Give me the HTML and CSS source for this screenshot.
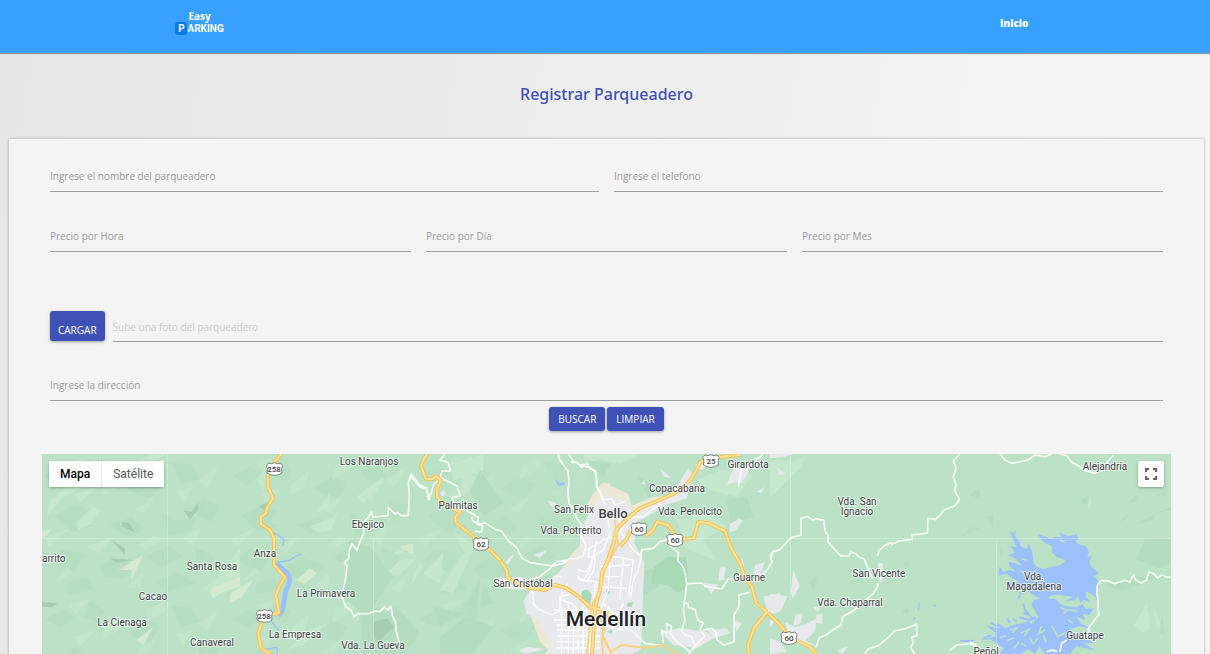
FILE: index.html
```html
<!DOCTYPE html>
<html lang="es">
<head>
<meta charset="utf-8">
<meta name="viewport" content="width=device-width, initial-scale=1">
<title>Easy Parking</title>
<link rel="stylesheet" href="styles.css">
</head>
<body>
<header class="topbar">
  <a class="logo" href="#">
    <span class="logo-top">Easy</span>
    <span class="logo-bottom"><span class="logo-p">P</span><span class="logo-rest">ARKING</span></span>
  </a>
  <nav><a class="nav-link" href="#">Inicio</a></nav>
</header>
<h1 class="title">Registrar Parqueadero</h1>
<main class="card">
  <form class="form">
    <div class="row two">
      <div class="field"><label for="nombre">Ingrese el nombre del parqueadero</label><input id="nombre" type="text"></div>
      <div class="field"><label for="telefono">Ingrese el telefono</label><input id="telefono" type="text"></div>
    </div>
    <div class="row three">
      <div class="field"><label for="hora">Precio por Hora</label><input id="hora" type="text"></div>
      <div class="field"><label for="dia">Precio por Día</label><input id="dia" type="text"></div>
      <div class="field"><label for="mes">Precio por Mes</label><input id="mes" type="text"></div>
    </div>
    <div class="upload">
      <button class="btn btn-file" type="button">CARGAR</button>
      <div class="field"><input type="text" aria-label="Foto del parqueadero" placeholder="Sube una foto del parqueadero"></div>
    </div>
    <div class="field"><label for="direccion">Ingrese la dirección</label><input id="direccion" type="text"></div>
    <div class="actions">
      <button class="btn" type="button">BUSCAR</button>
      <button class="btn" type="button">LIMPIAR</button>
    </div>
  </form>
  <section class="map" aria-label="Mapa">
    <svg class="map-art" viewBox="42 454 1129 200" preserveAspectRatio="xMidYMin slice">
      <defs>
        <pattern id="relief" width="187" height="143" patternUnits="userSpaceOnUse" x="42" y="454">
          <path class="dark" d="M3 22l18-9 12 6-14 12zM48 4l14 10-4 12-17-6zM84 34l20-12 15 8-10 14-14-3zM128 8l22 3 8 14-18 5zM12 62l20-11 17 7-9 10 12 4-22 6zM67 71l23-8 12 12-16 8zM120 58l14 9 20-5-6 15-22 4zM160 44l19 8-10 16-14-7zM6 107l14-12 24 5-12 17zM57 112l17-8 22 8-14 13-18-2zM104 103l22-12 14 11-20 12zM152 93l17 7 8 20-20-6zM28 128l18-4 5 12-26 4zM113 128l24-9 17 11-29 8z"/>
          <path class="light" d="M26 8l22-6-14 15zM62 31l18-14-4 17-16 7zM106 12l16-8 3 9-22 13zM156 26l21-13-12 21zM32 40l22-7-16 16zM92 56l21-14-9 17zM134 37l17-4-9 15zM2 84l26-10-20 19zM46 92l24-9-13 17zM97 91l14-9 9 4-16 9zM140 84l20-12-8 19zM14 127l12-13 4 5zM84 133l17-14-2 15zM160 136l20-17-8 20z"/>
        </pattern>
        <linearGradient id="fadeLeft"><stop offset="0" stop-color="#fff" stop-opacity=".8"/><stop offset=".82" stop-color="#fff" stop-opacity=".5"/><stop offset="1" stop-color="#fff" stop-opacity="0"/></linearGradient>
        <mask id="reliefMask"><rect x="42" y="454" width="590" height="400" fill="url(#fadeLeft)"/></mask>
        <symbol id="shield" viewBox="0 0 18 14"><path d="M3 1q3 1.5 6-.3Q12 2.500 15 1l2 2.500Q15.500 7 16.500 11q-3 2.500-7.500 2.300Q4.500 13.500 1.500 11 2.500 7 1 3.500z" fill="#fff" stroke="#777" stroke-width=".9"/></symbol>
      </defs>
      <rect x="42" y="454" width="1129" height="400" fill="#bbe2c6"/>
      <rect x="42" y="454" width="590" height="400" fill="url(#relief)" mask="url(#reliefMask)"/>

      <!-- relief, west -->
      <g transform="translate(40 450) scale(.33333)">
        <path class="light" d="M30 150l70-50 60-40-30 50-60 30-50 60zM110 215l50-45 25 10-30 40-40 20zM270 40l70-28 40 0-60 40zM500 430l60-80 40-60v90l-50 50z"/>
        <path class="pale" d="M6 245l30-10-20 25-10 5zM235 360l75-45-35 75 0-30zM520 410l60-20 20-10v30l-50 15-30 20-10-15zM290 570l50-40-30 55z"/>
        <path class="deep" d="M248 215l20 5 17 28-40-20zM430 180l25 5 20-28 0 20-25 32zM215 270l40 25 0 20zM210 325l70 5-50 8zM6 455l48 5-20 12-28-2z"/>
      </g>
      <g transform="translate(230 450) scale(.33333)">
        <path class="light" d="M80 90l30-40-10 70zM240 230l60-25 25-20-20 55-40 10zM260 185l40-60-5 50zM380 140l80-60 0 20-60 60zM470 370l40-40 50-5-50 50zM490 310l65-30-50 35zM170 600l70-60 60-25-80 70z"/>
        <path class="pale" d="M0 430l70-40-35 50-35 20zM200 390l40-35 22 15-40 32zM510 290l40-10 0 35z"/>
        <path class="dark" d="M360 270l60 20 70 90-80 120-70-60zM390 500l110-30 70 80-50 62H400z"/>
        <path class="deep" d="M432 515l40-10 20 25-50 48-12-30zM85 170l30-15-10 25z"/>
      </g>
      <g transform="translate(410 450) scale(.33333)">
        <path class="light" d="M120 40l100-28 0 50-90 30zM150 70l90 15-80 50zM40 370l60-60-10 90zM90 420l70-110 20 10-50 110zM130 250l80 40-40 30zM0 410l30-80 10 20z"/>
        <path class="dark" d="M210 60l70 100-60 40-40-80zM70 470l90 20-70 40zM170 460l40-70-10 90zM220 400l30 60-40 10zM90 560l80-60 80 30-60 82H90z"/>
      </g>

      <!-- relief, centre and east -->
      <g transform="translate(580 450) scale(.33333)">
        <path class="light" d="M10 12H180l-60 30-60-15-40 20zM350 90l70-30 100 15-50 65-80-20zM290 210l100-20 50 40-70 40 40 60-90-30z"/>
        <path class="dark" d="M20 30l70 12-20 40zM440 150l60-10 20 60-70 20zM170 80l50 20-10 50zM195 360l60-10-20 60-50 30z"/>
        <path class="park" d="M214 390l10-40 35-28 60 0 5 70-10 25-20 10-30-22-50-5z"/>
      </g>
      <g transform="translate(770 450) scale(.33333)">
        <path class="light" d="M0 30h20l50 5 40-20-20 40-90 90z"/>
        <path class="dark" d="M600 135l30-20-5 30zM575 260l25-28 30 3-25 10zM400 345l15-15 3 18zM120 400l22-30-8 60zM395 485l17-15 5 20z"/>
      </g>
      <g transform="translate(970 450) scale(.33333)">
        <path class="dark" d="M5 130l18-15 8 22zM48 200l20-5 3 38zM332 150l20-10 0 30zM450 215l25-25-10 20zM475 155l30-22-10 25zM490 225l50-25 15-10-5 20zM545 140l45-15-5 10zM558 190l45-20v10zM500 330l25-65h78v75l-40 15zM400 405l90-25 113-5-90 30-60 15zM575 500l10 55-15-5zM85 290l14 20-4 15z"/>
        <path class="light" d="M350 170l14-32-3 35zM492 525l38-65 12 70-20 20zM548 475l24 45-8 20z"/>
      </g>

      <!-- city -->
      <g transform="translate(410 450) scale(.33333)">
        <path class="tan" d="M548 140l25-40 27 0v90l-50 150-110 60-80 30-10 35 40 110 35 37 30-30-30-180 60-90 60-60 10-90z"/>
        <path class="urban" d="M553 150l30-10 100 30-10 110 30 60-10 260-30 12H405l20-30-40-70-35-20-10-40 20-30 60-30 20-20 40-30 40-50 40-60 10-50z"/>
        <path class="urban" d="M412 152l25 5-2 25zM520 215l12-8 10-2-15 18zM372 315l40-15-22 23zM285 340l15-20 14-8-18 30zM90 130l12-10 7 12-12 8zM250 385l80-5 45 15-20 25-80-5zM325 600l30-10 50 8-60 14z"/>
      </g>
      <g transform="translate(580 450) scale(.33333)">
        <path class="tan" d="M40 130l30-33 75 35 10 35 60-25 80-10-20 20-80 35-60 20-10 50 50 60 15 40-15 60 0 130-25-10-20-270-60-60-60-20z"/>
        <path class="urban" d="M45 160l30-25 60 15 20 35 60-25 70-30 20-45 20-30 15 20-20 70-60 20-60 35-50 25-10 60 40 45-5 250-45 27H0V240z"/>
        <path class="urban" d="M240 55l33 28-22-2zM440 105l20-50 30-10 20 0-8 30-20 25-15-5zM345 45l35-30 25 10-40 35zM183 100l10-7 5 12zM530 125l25-15-12 20zM450 222l30-18 8 8-22 30-18 5zM415 392l4-38 18-6-4 42zM370 400l45 3-20 28zM485 320l8 25-8 30zM525 345l30-10-15 40-20 5zM550 440l50-10v55l-35 10zM460 510l25 10-15 25zM380 540l60-5 10 15-50 15zM240 545l60-10 80 10 20 20-50 30-70-10z"/>
        <path class="park" d="M5 425q20-15 30 10l-5 30-25-10zM143 460l17-3-5 13-15 0zM78 420l10-3 2 15-10 2zM82 545l15-7-3 15z"/>
      </g>
      <g transform="translate(770 450) scale(.33333)">
        <path class="urban" d="M23 53l24 20-20 2zM70 360l20 48-22 37-6-20zM0 432l52 7-20 45-32-5zM76 494l22-4-6 30-22 8zM100 525l38-18-2 35-30 30 35 15-80-10-15-60 30 15zM137 495l20-4 0 30-18-2zM325 340h13l3 45-10 15-8-20zM202 600l30-10-15 22zM0 510l15 2-15 20zM0 12h70l-30 10-40 3zM0 565l30 10 20 30-50 7zM130 472l22-4-8 18z"/>
        <path class="water-line" d="M445 482l3-22M488 465l10 3M430 512l6-10"/>
      </g>

      <!-- reservoir -->
      <g transform="translate(960 520) scale(.33333)">
        <path class="water" d="M233 43L255 49 272 58 284 50 305 53 298 38 325 48 350 42 355 58 345 65 362 74 380 80 386 95 382 110 396 108 388 125 394 140 418 160 398 168 414 180 410 210 413 237 395 222 378 214 378 232 392 247 370 240 362 250 352 226 346 241 312 243 340 232 300 224 275 226 262 234 285 238 310 258 350 262 367 252 378 268 402 264 388 285 368 282 377 300 350 290 362 310 394 326 358 318 332 328 352 350 408 368 370 370 408 392 350 378 330 402H255L238 378 226 402 204 388 182 402H118L132 385 110 370 92 358 56 360 104 350 106 338 80 318 118 325 108 306 138 325 160 315 190 308 207 303 212 312 228 300 235 290 222 268 214 254 222 240 240 236 215 222 205 214 196 204 150 202 140 190 180 185 156 175 140 160 115 167 118 140 130 156 150 150 168 155 148 138 145 125 165 130 188 138 168 118 144 105 166 98 150 78 170 82 162 66 155 48 149 34 162 40 168 28 165 48 178 64 182 78 200 88 206 70 216 95 222 130 230 140 250 148 275 140 300 136 316 124 308 116 290 112 275 95 278 80 250 66z"/>
        <path class="water-spikes" d="M180 225l-5 12M190 250l5 20 12 14-16-5M178 292l28 8 22-8M92 308l22 12M70 354l24-8M176 215l10 8M190 95l14 12M384 215l10-8M230 300l-20-10M130 335l-16 6M150 308l-8-12M170 305l-10-10M0 364l40-2"/>
        <path class="land-spikes" d="M245 318l-8 22 18-10M150 330l20-6-12 14M182 340l25-12-14 20M208 352l12 20 14-18M140 362l22-8M160 386l18-20M276 318l16 30M290 350l26-12M322 270l28 2M300 262l20 10-10 8M332 248l22-2M270 385l16 12M120 352l18-4M250 345l8 22M182 370l16 8M200 120l-16-4M196 160l-14-6M325 300l14 10M300 60l14 6"/>
      </g>
      <path class="water-line thin" d="M1112 454v5l-4 4"/>

      <!-- Cauca river -->
      <g transform="translate(230 450) scale(.33333)">
        <path class="water-line" d="M115 105l18 35-15 25-12 20-14 22 5 20 25 18 18 8 22 16-3 18M142 335l18 0 20-5 25-15 10-2M130 345l40 30M125 515l22 27M100 600l40-8 2 20"/>
        <path d="M138 340l35 30q15 20-5 50l-10 60-12 18" fill="none" stroke="#9cc0f9" stroke-width="14" stroke-linejoin="round"/>
      </g>
      <path class="water" d="M555 479l5 4 4-1 1 3-7 1zM676 562l5-1 1 3-5 0z"/>

      <!-- secondary roads -->
      <g class="minor">
        <g transform="translate(230 450) scale(.33333)"><path d="M600 150l-12-35-20-5-8-18-17-20-8 25 3 40-3 60-22 0-10-10-8 5-20-20-1 25-40 4-5 0-5-15-8 15-15 15 0 35-10 20-10 30-15-20-8 20-2 25-13 12 8 8-3 30-3 20-12 40 15 35 15 10 10 20 12-10 30 0 20-8 15 2 13-15 10 10 10-10 5 30 8 15 3 30 8 30 0 16"/></g>
        <g transform="translate(410 450) scale(.33333)"><path d="M0 90l5-10 15 20 30 15 5 35 10-25 5-20 20-20M105 12l-15 18 25 8 6 25-25 0-5 20 20 10 30 15 10 30-25 5 10 35 25 0 30 15 15 10-5 20 18 5-5 18-20-2M185 200l5 15 20 8 15-5 30 20 20 5 20 30 25 20 15 30 25 15 70 10 30-8 20-15 20 2 20-10 8-30-15-30 0-35-15-20-5-25-15-15-5-40 5-25-5-35-25-35-5-30-10-22-40-5-15-7M475 12l15 20-5 5 15 0 15 15 5-5 15 5 20 10 5 30 0 20 10 15 8 25M355 410l15 20 0 30 10 15 45 20M360 390l30-10 30-25 20-20 35-5M430 380l25 0"/></g>
        <g transform="translate(580 450) scale(.33333)"><path d="M0 45l20-3 15 15 12 8 3 25 0 20 15 25 10 30M290 115l-25 25-25 10 0 10-50 40-25 0-30 15-10 25-15 20M475 110l5-30 5-28 25 0 5-20 25-10 8-10M180 325l5-25 35-5 20-20 25-8M265 283l30 25-2 25 15 15 8 25 4 28 45-2 10 10 50 8 20-30 30-5M600 300l-20 5-8 20 5 10-15 25-30 25-25 10M320 400l-5 45-5 30 5 35-10 30 10 15 20 5 10 30-20 22M310 458l15 3 0 12 20 5 10 35 15 5-10 20 15 20-40 40M370 540l25-5 12 10 5 25 20 15 30-10 0-80 15-25 0-35 30-8M250 580l-5-40 15 10 0-30 15 10-5 20 20 25 40 30M100 545l35-15 30 20 30 30 50 7"/></g>
        <g transform="translate(770 450) scale(.33333)"><path d="M0 320l8-15 20-5 15-15 20-22 30-8 0-50 20-5 15 10 8-4 25 5 5 35 8 10 0 20 20 22 18 20 25 0 5-12 15 5 10 10 15 5 25 60M568 12l-18 22 8 20-8 30 8 20-5 15 15 30-15 20-30 10-15 18-12 12-22-5-2 45-25 4-10 0-10 0 0 15-40 5-20 10-5-5-20 10-15 15-5 15M325 400l-5 15-10 15-22 20-35 30-35 20-5 25-25 15-20 15-20 8-10 28M285 612l10-15 30-10 30-25 20-20 30-5 35-15 0 35-15 5 5 15-8 15 12 20M540 600l20-15 50-5 25 20"/></g>
        <g transform="translate(970 450) scale(.33333)"><path d="M90 12l15 18 20 10 50-10 20-15 30 5 20-8M270 12l20 5 15 20 20 10 20 15 30 8 20-10 15-20 20-25M603 382l-18-2-8-5-15 8-10-12-15-5-8 25-15 8-18-10-5-15-12 22-15-5-15 5-15 5-20-8-20-2-12 15-2 25 5 20-2 30 5 10-15 20-20 28M360 540l-15 20-25 5M290 570l-15 10-5 25M230 605l20-5 12 5M0 575l15 15"/></g>
      </g>
      <!-- city streets -->
      <g class="street">
        <g transform="translate(410 450) scale(.33333)"><path d="M540 290l-5 30 20 5-5 40-20 30-25-10 0-25 25 5M560 270l-10 50M510 390l50 5-10 60M475 400l-20 20 0 30 30 10 20 20 0 130M455 470l0 142M430 480l100 0M430 510l120 0M440 525l90 0M440 540l110 0M440 558l100 0M440 575l110 0M440 594l110 0M475 460v152M490 470v142M520 470v142M540 470v142M425 495l25-15 0-40 40-10"/></g>
        <g transform="translate(580 450) scale(.33333)"><path d="M75 150l20-5 10 20 30-10M80 180l10 70-20 50-30 20-10 40-20 30M45 300l-25 80M110 170l15 80 35 50 25 20-10 40-15 30-10 60M100 320l60 10-15 110M50 380l70 0M60 350l90-5M40 410l100 5M90 320l-5 100-25 60M130 320l-10 130M70 460l40 40 20-40M35 480v132M10 480v132M22 480v132M0 510h60M0 525h60M0 540h60M0 558h60M0 575h60M0 594h60M85 470l-5 60 50 10M20 300l50-30 50-20"/></g>
      </g>

      <!-- highways -->
      <g class="hw-case">
        <path d="M281 454L275 462 268 475V487L273 498 267 508 266 513 261 517V524L270 530 274 538V565L285 577 280 585 276 595 279 613 267 615 262 623 258 633 261 648 273 656"/>
        <path d="M427 454L424 459 421 466 426 479H433L436 476 441 481 437 489V496L441 502 452 508 460 512 455 517 456 523 465 530 475 538 490 550 500 560 507 571 507 576 513 582 530 588 545 590 555 585 566 588 578 596 590 607 600 609"/>
        <path d="M740 455L720 457 700 462 696 471 691 479 684 487 673 494 655 502 640 508 629 517 617 529 613 545 608 560 602 573 600 590 596 604 594 620 592 656"/>
        <path d="M620 546L627 539 630 531 M646 536L653 530 657 522 668 525 675 535 685 539 694 538 698 522 708 523 725 531 731 548 741 565 744 576 752 587 756 603 767 612"/>
        <path d="M767 612L754 628 748 645 749 656"/>
        <path d="M768 613L772 617 783 628 788 637 800 642 810 647 818 656"/>
      </g>
      <g class="hw-city"><path d="M615 520L618 545 606 567 600 590 591 607 587 656M600 609L603 636 612 656M610 652L622 645 645 648 663 645 678 654M586 602L596 610 608 612 602 640 603 656"/></g>
      <g class="hw-core">
        <path d="M281 454L275 462 268 475V487L273 498 267 508 266 513 261 517V524L270 530 274 538V565L285 577 280 585 276 595 279 613 267 615 262 623 258 633 261 648 273 656"/>
        <path d="M427 454L424 459 421 466 426 479H433L436 476 441 481 437 489V496L441 502 452 508 460 512 455 517 456 523 465 530 475 538 490 550 500 560 507 571 507 576 513 582 530 588 545 590 555 585 566 588 578 596 590 607 600 609"/>
        <path d="M740 455L720 457 700 462 696 471 691 479 684 487 673 494 655 502 640 508 629 517 617 529 613 545 608 560 602 573 600 590 596 604 594 620 592 656"/>
        <path d="M620 546L627 539 630 531 M646 536L653 530 657 522 668 525 675 535 685 539 694 538 698 522 708 523 725 531 731 548 741 565 744 576 752 587 756 603 767 612"/>
        <path d="M767 612L754 628 748 645 749 656"/>
        <path d="M768 613L772 617 783 628 788 637 800 642 810 647 818 656"/>
      </g>
      <path d="M42 538.500H1171M167.500 454V854M373.500 538V654M790.500 454V600M996.500 540V654" stroke="#fff" stroke-opacity=".25" fill="none"/>

      <!-- route shields -->
      <use href="#shield" x="265" y="462" width="19" height="14"/><use href="#shield" x="255" y="609" width="19" height="14"/>
      <use href="#shield" x="472" y="537" width="18" height="14"/><use href="#shield" x="702" y="454" width="18" height="14"/>
      <use href="#shield" x="630" y="522" width="18" height="14"/><use href="#shield" x="666" y="533" width="18" height="14"/>
      <use href="#shield" x="780" y="631" width="18" height="14"/>
      <g class="route"><text x="274" y="472">258</text><text x="264" y="619">258</text><text x="481" y="547">62</text><text x="711" y="464">25</text><text x="639" y="532">60</text><text x="675" y="543">60</text><text x="789" y="641">60</text></g>

      <!-- place names -->
      <g class="place">
        <text x="42" y="562" class="start">arrito</text>
        <text x="212" y="570">Santa Rosa</text><text x="153" y="600">Cacao</text><text x="122" y="626">La Cienaga</text><text x="212" y="646">Canaveral</text>
        <text x="369" y="465">Los Naranjos</text><text x="368" y="528">Ebejico</text><text x="265" y="557">Anza</text><text x="326" y="597">La Primavera</text><text x="295" y="638">La Empresa</text><text x="373" y="649">Vda. La Gueva</text>
        <text x="458" y="509">Palmitas</text><text x="574" y="513">San Felix</text><text x="571" y="534">Vda. Potrerito</text><text x="523" y="587">San Cristóbal</text>
        <text x="748" y="468">Girardota</text><text x="677" y="492">Copacabana</text><text x="690" y="515">Vda. Penolcito</text><text x="749" y="581">Guarne</text>
        <text x="857" y="505">Vda. San</text><text x="857" y="515">Ignacio</text><text x="879" y="577">San Vicente</text><text x="850" y="606">Vda. Chaparral</text>
        <text x="1105" y="470">Alejandría</text><text x="1034" y="580">Vda.</text><text x="1034" y="590">Magadalena</text><text x="1085" y="639">Guatape</text><text x="986" y="655">Peñol</text>
        <text x="613" y="518" class="town">Bello</text><text x="606" y="626" class="city">Medellín</text>
      </g>
    </svg>
    <div class="map-controls">
      <div class="map-type"><button class="map-tab active" type="button">Mapa</button><button class="map-tab" type="button">Satélite</button></div>
      <button class="map-full" type="button" aria-label="Pantalla completa"><svg width="12" height="12" viewBox="0 0 12 12"><path d="M1 4V1h3M8 1h3v3M11 8v3H8M4 11H1V8" fill="none" stroke="#666" stroke-width="2"/></svg></button>
    </div>
  </section>
</main>
</body>
</html>
```
FILE: styles.css
```css
* { box-sizing: border-box; }
body {
  margin: 0;
  min-height: 100vh;
  display: flex;
  flex-direction: column;
  background: linear-gradient(100deg, #e7e7e7, #f5f5f5 90%);
  font-family: "Open Sans", "Noto Sans", sans-serif;
  font-size: 10px;
}
button, input { font: inherit; margin: 0; }

.topbar {
  display: flex;
  justify-content: space-between;
  height: 53px;
  padding: 11px 15% 0 14.5%;
  background: #38a1ff;
  box-shadow: 0 1px 1px rgba(0, 0, 0, .35);
}
.logo {
  display: flex;
  flex-direction: column;
  align-items: center;
  height: 25px;
  color: #fff;
  text-decoration: none;
  font-weight: 700;
}
.logo-top { font-family: "Noto Sans", sans-serif; font-size: 10px; line-height: 11px; }
.logo-bottom { display: flex; align-items: center; }
.logo-p {
  width: 12px;
  border-radius: 3px;
  background: #0879e6;
  font-family: Roboto, sans-serif;
  font-size: 10px;
  line-height: 13px;
  text-align: center;
}
.logo-rest { font-family: Roboto, sans-serif; font-size: 10px; line-height: 13px; }
.nav-link {
  display: block;
  color: #fff;
  font-weight: 800;
  line-height: 24px;
  text-decoration: none;
}

.title {
  margin: 27px 0 31px;
  padding-left: 3px;
  color: #3f51b5;
  font-family: "Noto Sans", sans-serif;
  font-size: 16px;
  font-weight: 500;
  line-height: 28px;
  text-align: center;
}

.card {
  flex: 1;
  display: flex;
  flex-direction: column;
  margin: 0 6px 0 9px;
  padding: 23px 33px 0;
  background: #f4f4f4;
  box-shadow: 0 0 3px rgba(0, 0, 0, .3);
}
.form { padding: 0 8px; }
.row { display: grid; column-gap: 15px; margin-bottom: 30px; }
.two { grid-template-columns: 1fr 1fr; }
.three { grid-template-columns: 1fr 1fr 1fr; margin-bottom: 59px; }
.field { display: grid; height: 30px; }
.field label, .field input { grid-area: 1 / 1; }
.field label { color: #999; line-height: 29px; z-index: 1; }
.field input {
  width: 100%;
  min-width: 0;
  padding: 0;
  border: 0;
  border-bottom: 1px solid #9e9e9e;
  background: transparent;
  outline: 0;
}
.field input::placeholder { color: #cacaca; opacity: 1; }
.upload {
  display: grid;
  grid-template-columns: auto 1fr;
  column-gap: 8px;
  height: 31px;
  margin-bottom: 29px;
}
.upload .field { align-self: end; }
.btn {
  height: 24px;
  padding: 0 9px;
  border: 0;
  border-radius: 3px;
  background: #3f51b5;
  color: #fff;
  font-weight: 500;
  box-shadow: 0 1px 3px rgba(0, 0, 0, .35);
}
.btn-file { height: 30px; padding: 8px 8px 0; }
.actions { display: flex; justify-content: center; gap: 2px; margin: 6px 0 23px; }

.map { flex: 1; display: grid; min-height: 200px; overflow: hidden; }
.map-art, .map-controls { grid-area: 1 / 1; }
.map-art { display: block; width: 100%; height: 100%; min-height: 0; }
.map-controls {
  z-index: 1;
  display: flex;
  justify-content: space-between;
  align-items: flex-start;
  padding: 7px;
  font-family: Roboto, sans-serif;
}
.map-type { display: flex; box-shadow: 0 1px 3px rgba(0, 0, 0, .3); border-radius: 2px; }
.map-tab { height: 26px; padding: 0 11px; border: 0; background: #fff; color: #565656; font-size: 12px; }
.map-tab.active { color: #000; font-weight: 500; border-right: 1px solid #e6e6e6; }
.map-full {
  display: grid;
  place-items: center;
  width: 26px;
  height: 26px;
  padding: 0;
  border: 0;
  border-radius: 2px;
  background: #fff;
  box-shadow: 0 1px 3px rgba(0, 0, 0, .3);
}

.dark { fill: #b4dcc0; }
.deep { fill: #a6cdb3; }
.light { fill: #c5e7cb; }
.pale { fill: #d5ebd0; }
.park { fill: #a8dab5; }
.tan { fill: #efe7d5; }
.urban { fill: #e7e9ed; }
.water { fill: #9cc0f9; }
.water-line { fill: none; stroke: #9cc0f9; stroke-width: 4; }
.water-line.thin { stroke-width: 1; }
.water-spikes { fill: none; stroke: #9cc0f9; stroke-width: 6; }
.land-spikes { fill: none; stroke: #bbe2c6; stroke-width: 5; }
.minor { fill: none; stroke: #f7fbf8; stroke-width: 5; stroke-linejoin: round; }
.street { fill: none; stroke: #fff; stroke-width: 4; stroke-linejoin: round; }
.hw-case { fill: none; stroke: #f3c25a; stroke-width: 4; stroke-linejoin: round; }
.hw-city { fill: none; stroke: #f8d080; stroke-width: 2; }
.hw-core { fill: none; stroke: #fde293; stroke-width: 2; stroke-linejoin: round; }
.route { font: 500 8px Roboto, sans-serif; fill: #444; text-anchor: middle; }
.place {
  font: 10px Roboto, sans-serif;
  fill: #3c4043;
  stroke: #fff;
  stroke-width: 2px;
  stroke-opacity: .7;
  stroke-linejoin: round;
  paint-order: stroke;
  text-anchor: middle;
}
.place .start { text-anchor: start; }
.place .town { font-size: 13px; font-weight: 500; }
.place .city { font-size: 21px; font-weight: 500; fill: #202124; }
```
